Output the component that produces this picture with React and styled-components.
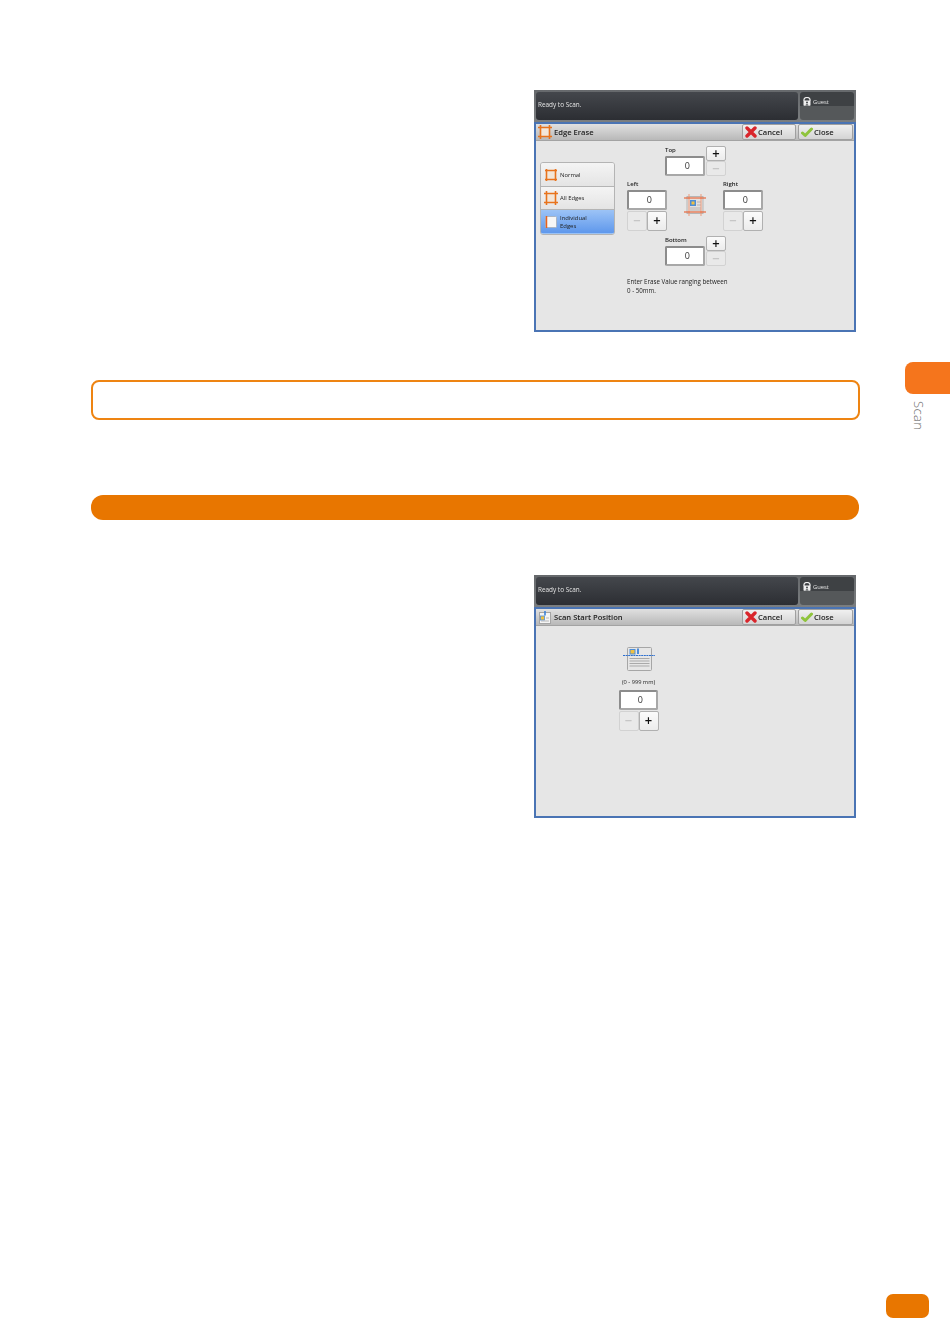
import React from "react";
import styled, { createGlobalStyle } from "styled-components";

const Global = createGlobalStyle`
  html, body { margin: 0; padding: 0; background: #fff; }
  body { font-family: "Open Sans", "Liberation Sans", sans-serif; overflow: hidden; }
  * { box-sizing: border-box; }
`;

const Page = styled.div`
  display: grid;
  grid-template-columns: 860px 90px;
  width: 950px;
  height: 1344px;
`;
const Main = styled.main`
  display: flex;
  flex-direction: column;
  padding: 90px 4px 0 91px;
`;
const Rail = styled.aside`
  display: flex;
  flex-direction: column;
  padding: 362px 0 26px;
`;
const ChapterTab = styled.div`
  align-self: flex-end;
  width: 45px;
  height: 32px;
  background: #f5751c;
  border-radius: 8px 0 0 8px;
`;
const ChapterLabel = styled.div`
  align-self: flex-start;
  margin: 7px 0 0 52px;
  writing-mode: vertical-rl;
  font-size: 13px;
  line-height: 14px;
  letter-spacing: 0.4px;
  font-weight: 300;
  color: #6a6a6a;
`;
const PageTab = styled.div`
  margin: auto 0 0 26px;
  width: 43px;
  height: 24px;
  background: #e87600;
  border-radius: 7px;
`;
const Note = styled.div`
  width: 769px;
  height: 40px;
  margin-top: 48px;
  border: 2px solid #ee8412;
  border-radius: 8px;
  background: #fff;
`;
const SectionBar = styled.div`
  width: 768px;
  height: 25px;
  margin-top: 75px;
  background: #e87600;
  border-radius: 12px;
`;
const ScreenWrap = styled.section`
  align-self: flex-end;
  display: flex;
  flex-direction: column;
  width: 322px;
  height: ${p => p.$height}px;
  margin-top: ${p => p.$top}px;
  color: #222;
  filter: blur(0.3px);
`;
const StatusBar = styled.div`
  display: flex;
  gap: 2px;
  height: 32px;
  padding: 2px 2px 2px;
  background: linear-gradient(#66696c, #7b7e80);
`;
const StatusPanel = styled.div`
  flex: 1;
  display: flex;
  align-items: center;
  padding: 0 0 3px 2px;
  font-size: 6.4px;
  color: #e4e4e4;
  border-radius: 3px;
  background: linear-gradient(#44474c, #2c2e33);
`;
const GuestPanel = styled.div`
  display: flex;
  align-items: flex-start;
  gap: 2px;
  width: 54px;
  padding: 5px 0 0 3px;
  font-size: 5.8px;
  color: #e4e4e4;
  border-radius: 3px;
  background: linear-gradient(#3e4144 0 50%, #55585a 50% 100%);
  svg { flex: none; }
`;
const GuestText = styled.span`
  margin-top: 1px;
`;
const Frame = styled.div`
  flex: 1;
  display: flex;
  flex-direction: column;
  border: 2px solid #4a74b4;
  background: #e6e6e6;
`;
const TitleBar = styled.div`
  display: flex;
  align-items: center;
  height: 17px;
  padding: 0 1px 0 2px;
  gap: 2px;
  border-bottom: 1px solid #a3a3a3;
  background: linear-gradient(#e0e0e0, #b8b8b8);
`;
const Title = styled.div`
  flex: 1;
  font-size: 7.6px;
  font-weight: 600;
  color: #222;
  white-space: nowrap;
`;
const ActionButton = styled.div`
  display: flex;
  align-items: center;
  gap: 1px;
  width: ${p => p.$width}px;
  height: 16px;
  margin-right: ${p => p.$gap || 0}px;
  padding-left: 2px;
  font-size: 7.6px;
  font-weight: 600;
  color: #222;
  border: 1px solid #a0a0a0;
  border-radius: 2px;
  background: linear-gradient(#f0f0f0, #d4d4d4);
`;
const EdgeContent = styled.div`
  flex: 1;
  display: grid;
  grid-template-columns: 75px 136px;
  column-gap: 12px;
  align-items: start;
  padding: 5px 0 0 4px;
`;
const ModeList = styled.div`
  display: flex;
  flex-direction: column;
  margin-top: 16px;
  border: 1px solid #b4b4b4;
  border-radius: 3px;
  overflow: hidden;
`;
const ModeItem = styled.div`
  display: flex;
  align-items: center;
  gap: 2px;
  height: ${p => p.$h}px;
  padding-left: 3px;
  font-size: 5.9px;
  line-height: 8px;
  font-weight: 500;
  color: #222;
  border-bottom: 1px solid ${p => (p.$active ? "transparent" : "#b4b4b4")};
  background: ${p => p.$active
    ? "linear-gradient(#9cc3f6, #5f98ec)"
    : "linear-gradient(#f4f4f4, #e4e4e4)"};
`;
const Controls = styled.div`
  display: flex;
  flex-direction: column;
`;
const VGroup = styled.div`
  display: flex;
  gap: 1px;
  margin: ${p => p.$top}px 0 0 38px;
`;
const Field = styled.div`
  display: flex;
  flex-direction: column;
  width: 40px;
`;
const FieldLabel = styled.div`
  height: 10px;
  font-size: 6px;
  line-height: 8px;
  font-weight: 600;
  color: #222;
`;
const ValueBox = styled.div`
  width: ${p => p.$w || 40}px;
  height: 20px;
  padding-right: 13px;
  text-align: right;
  font-size: 9px;
  line-height: 16px;
  color: #333;
  background: #fff;
  border: 2px solid #8c8c8c;
  border-bottom-color: #a8a8a8;
  border-right-color: #a8a8a8;
  border-radius: 2px;
`;
const MiddleRow = styled.div`
  display: flex;
  justify-content: space-between;
  align-items: flex-start;
  margin-top: 4px;
`;
const EdgeGlyph = styled.div`
  margin-top: 14px;
  width: 22px;
`;
const StepV = styled.div`
  display: flex;
  flex-direction: column;
  width: 20px;
`;
const StepH = styled.div`
  display: flex;
  width: 40px;
  height: 20px;
  margin-top: 1px;
`;
const StepButton = styled.div`
  flex: 1;
  display: flex;
  align-items: center;
  justify-content: center;
  height: ${p => p.$h || 20}px;
  font-family: "DejaVu Sans", sans-serif;
  font-size: 10px;
  font-weight: 700;
  line-height: 1;
  color: ${p => (p.$off ? "#c4c4c4" : "#111")};
  border: 1px solid ${p => (p.$off ? "#d2d2d2" : "#b0b0b0")};
  border-radius: 2px;
  background: ${p => (p.$off ? "#e9e9e9" : "linear-gradient(#fbfbfb, #ececec)")};
`;
const Hint = styled.div`
  margin-top: 11px;
  width: 125px;
  font-size: 6.2px;
  line-height: 9px;
  color: #222;
`;
const StartContent = styled.div`
  flex: 1;
  display: flex;
  flex-direction: column;
  align-items: center;
  width: 39px;
  margin-left: 83px;
  padding-top: 20px;
`;
const RangeLabel = styled.div`
  margin-top: 5px;
  height: 10px;
  font-size: 5.7px;
  line-height: 10px;
  white-space: nowrap;
  color: #222;
`;
const SmallHint = styled.div`
  height: 3px;
`;

const Hash = ({ tight }) => (
  <svg width="14" height="14" viewBox="0 0 14 14">
    <rect x="2.5" y="2.5" width="9" height="9" fill="#f3e6d8" />
    <path
      d={tight
        ? "M2.5 1V13M11.5 1V13M1 2.5H13M1 11.5H13"
        : "M2.5 0V14M11.5 0V14M0 2.5H14M0 11.5H14"}
      stroke="#e8731c"
      strokeWidth="1.6"
      fill="none"
    />
  </svg>
);
const SingleEdge = () => (
  <svg width="14" height="14" viewBox="0 0 14 14">
    <rect x="1.5" y="1.5" width="11" height="11" rx="1" fill="#f6f6f6" stroke="#a9b4c4" />
    <path d="M2.5 1V13" stroke="#e8601c" strokeWidth="1.5" />
  </svg>
);
const PageEdges = () => (
  <svg width="22" height="22" viewBox="0 0 22 22">
    <rect x="3" y="2.5" width="16" height="17" fill="#e4e0de" stroke="#b5b5b5" />
    <rect x="6" y="6" width="6" height="6" fill="#4c8ed8" />
    <rect x="7.5" y="7.5" width="3" height="3" fill="#f0c040" />
    <path d="M13 8H17M13 11H17M6 14H17M6 16H17" stroke="#aaa" strokeWidth=".8" />
    <path d="M5 0V22M17 0V22" stroke="#ef9a7a" strokeWidth="1" />
    <path d="M0 4H22M0 18H22" stroke="#e8501c" strokeWidth="1" />
  </svg>
);
const Lock = () => (
  <svg width="8" height="9" viewBox="0 0 8 9">
    <path d="M1 4V2.6C1 1 2.4 .5 4 .5S7 1 7 2.6V4" fill="none" stroke="#f0f0f0" strokeWidth="1.2" />
    <rect x=".5" y="3.5" width="7" height="5.2" rx=".6" fill="#f0f0f0" />
    <circle cx="4" cy="5.4" r="1" fill="#45484b" />
    <path d="M2.6 8.4C2.8 7 5.2 7 5.4 8.4" fill="#45484b" />
  </svg>
);
const CancelMark = () => (
  <svg width="12" height="12" viewBox="0 0 12 12">
    <path d="M2 2L10 10M10 2L2 10" stroke="#d9252b" strokeWidth="3.4" strokeLinecap="round" />
  </svg>
);
const CloseMark = () => (
  <svg width="12" height="12" viewBox="0 0 12 12">
    <path d="M1.5 7L4.2 9.5L10.5 3" fill="none" stroke="#8fc43c" strokeWidth="3" strokeLinecap="round" strokeLinejoin="round" />
  </svg>
);
const StartTitleIcon = () => (
  <svg width="14" height="14" viewBox="0 0 14 14">
    <rect x="1.5" y="2.5" width="11" height="11" fill="#f4f4f4" stroke="#a5a5a5" />
    <rect x="2.5" y="6" width="4" height="4" fill="#f0c040" stroke="#4c8ed8" strokeWidth=".8" />
    <path d="M7 1V5.5" stroke="#3b82d8" strokeWidth="1.6" />
    <path d="M8 8H11M3 11H11" stroke="#aaa" strokeWidth=".8" />
  </svg>
);
const StartGlyph = () => (
  <svg width="32" height="26" viewBox="0 0 32 26">
    <rect x="4.5" y="1.5" width="24" height="23" rx="1" fill="#e6e6e6" stroke="#a6a6a6" />
    <rect x="7" y="3.5" width="5" height="4.5" fill="#f0c040" stroke="#4c8ed8" />
    <path d="M15 2.5V8" stroke="#3b82d8" strokeWidth="1.8" />
    <path d="M6.5 12.5H26.5M6.5 15H26.5M6.5 17.5H26.5M6.5 20H26.5" stroke="#a9a9a9" strokeWidth="1" />
    <path d="M0 9.5H32" stroke="#2c6fd0" strokeWidth="1" strokeDasharray="2 .6" />
  </svg>
);

const Screen = ({ height, top, icon, title, children }) => (
  <ScreenWrap $height={height} $top={top}>
    <StatusBar>
      <StatusPanel>Ready to Scan.</StatusPanel>
      <GuestPanel><Lock /><GuestText>Guest</GuestText></GuestPanel>
    </StatusBar>
    <Frame>
      <TitleBar>
        {icon}
        <Title>{title}</Title>
        <ActionButton $width={54}><CancelMark />Cancel</ActionButton>
        <ActionButton $width={55}><CloseMark />Close</ActionButton>
      </TitleBar>
      {children}
    </Frame>
  </ScreenWrap>
);

const VerticalControl = ({ label, top }) => (
  <VGroup $top={top}>
    <Field>
      <FieldLabel>{label}</FieldLabel>
      <ValueBox>0</ValueBox>
    </Field>
    <StepV>
      <StepButton>+</StepButton>
      <StepButton $off $h={19}>−</StepButton>
    </StepV>
  </VGroup>
);

const HorizontalControl = ({ label }) => (
  <Field>
    <FieldLabel>{label}</FieldLabel>
    <ValueBox>0</ValueBox>
    <StepH>
      <StepButton $off>−</StepButton>
      <StepButton>+</StepButton>
    </StepH>
  </Field>
);

export default function App() {
  return (
    <Page>
      <Global />
      <Main>
        <Screen height={242} top={0} icon={<Hash />} title="Edge Erase">
          <EdgeContent>
            <ModeList>
              <ModeItem $h={24}><Hash tight />Normal</ModeItem>
              <ModeItem $h={23}><Hash />All Edges</ModeItem>
              <ModeItem $h={24} $active><SingleEdge /><span>Individual<br />Edges</span></ModeItem>
            </ModeList>
            <Controls>
              <VerticalControl label="Top" top={0} />
              <MiddleRow>
                <HorizontalControl label="Left" />
                <EdgeGlyph><PageEdges /></EdgeGlyph>
                <HorizontalControl label="Right" />
              </MiddleRow>
              <VerticalControl label="Bottom" top={5} />
              <Hint>Enter Erase Value ranging between<br />0 - 50mm.</Hint>
            </Controls>
          </EdgeContent>
        </Screen>
        <Note />
        <SectionBar />
        <Screen height={243} top={55} icon={<StartTitleIcon />} title="Scan Start Position">
          <StartContent>
            <StartGlyph />
            <RangeLabel>(0 - 999 mm)</RangeLabel>
            <SmallHint />
            <ValueBox $w={39}>0</ValueBox>
            <StepH>
              <StepButton $off>−</StepButton>
              <StepButton>+</StepButton>
            </StepH>
          </StartContent>
        </Screen>
      </Main>
      <Rail>
        <ChapterTab />
        <ChapterLabel>Scan</ChapterLabel>
        <PageTab />
      </Rail>
    </Page>
  );
}
